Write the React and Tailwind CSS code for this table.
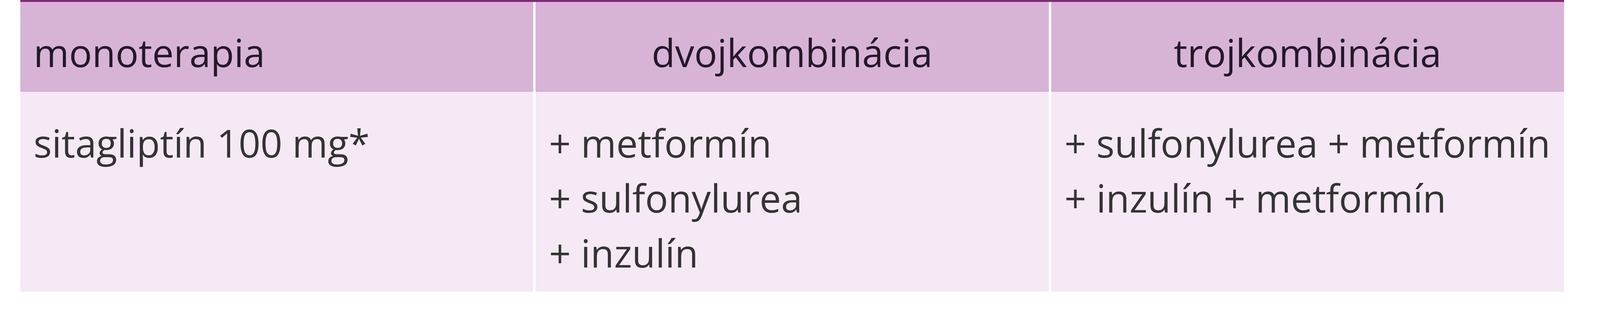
import React from 'react';

const columns = [
  { title: 'monoterapia', align: 'text-left', items: ['sitagliptín 100 mg*'] },
  { title: 'dvojkombinácia', align: 'text-center', items: ['+ metformín', '+ sulfonylurea', '+ inzulín'] },
  { title: 'trojkombinácia', align: 'text-center', items: ['+ sulfonylurea + metformín', '+ inzulín + metformín'] },
];

function App() {
  return (
    <div className="w-full h-[800px] bg-white pl-[1.26vw] font-['Open_Sans',sans-serif]">
      <div className="w-[96.5vw] border-t-[5px] border-[#7b2d73]">
        {/* header */}
        <div className="grid grid-cols-3 gap-x-[6px]">
          {columns.map((col) => (
            <div
              key={col.title}
              className={`h-[230px] bg-[#d7b4d6] border-t-[10px] border-t-[#e2acdc] border-b-2 border-b-[#caa6c8] px-[0.84vw] pt-[49px] text-[98px] leading-[141px] text-[#24182a] whitespace-nowrap ${col.align}`}
            >
              {col.title}
            </div>
          ))}
        </div>

        {/* body */}
        <div className="grid grid-cols-3 gap-x-[6px]">
          {columns.map((col) => (
            <div
              key={col.title}
              className="h-[513px] bg-[#f5e9f6] border-t-[7px] border-t-[#fae4f8] px-[0.84vw] pt-[54px] text-[98px] leading-[141px] text-[#333333]"
            >
              {col.items.map((item) => (
                <div key={item} className="whitespace-nowrap">{item}</div>
              ))}
            </div>
          ))}
        </div>
      </div>
    </div>
  );
}

export default App;
